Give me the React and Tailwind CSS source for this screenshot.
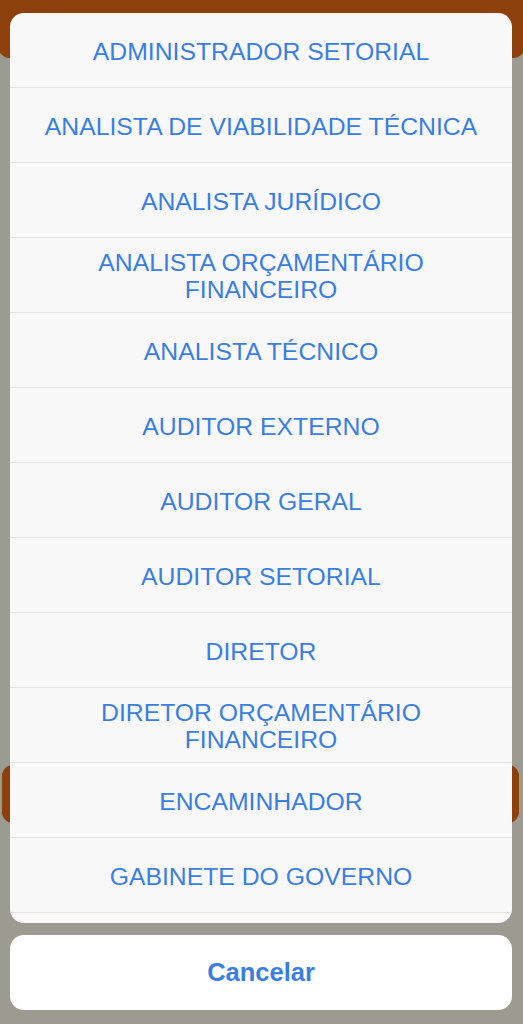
const OPTIONS = [
  ["ADMINISTRADOR SETORIAL"],
  ["ANALISTA DE VIABILIDADE TÉCNICA"],
  ["ANALISTA JURÍDICO"],
  ["ANALISTA ORÇAMENTÁRIO", "FINANCEIRO"],
  ["ANALISTA TÉCNICO"],
  ["AUDITOR EXTERNO"],
  ["AUDITOR GERAL"],
  ["AUDITOR SETORIAL"],
  ["DIRETOR"],
  ["DIRETOR ORÇAMENTÁRIO", "FINANCEIRO"],
  ["ENCAMINHADOR"],
  ["GABINETE DO GOVERNO"],
];

export default function App() {
  return (
    <div
      className="relative h-[1024px] w-full overflow-hidden bg-[#9b9b92]"
      style={{ fontFamily: '"Liberation Sans", Arial, sans-serif' }}
    >
      {/* page content behind the dimmed overlay */}
      <div className="absolute left-[-2px] right-[-2px] top-[-20px] h-[78px] rounded-[12px] bg-[#8e400c]" />
      <div className="absolute left-[2px] right-[4px] top-[765px] h-[58px] rounded-[11px] bg-[#8e400c]" />

      {/* action sheet */}
      <div className="absolute inset-0 flex flex-col pl-[10px] pr-[11px] pt-[13px] pb-[14px]">
        <div className="h-[910px] overflow-hidden rounded-[14px] bg-[#f8f8f8]">
          {OPTIONS.map((lines) => (
            <button
              key={lines.join(" ")}
              className="flex h-[75px] w-full flex-col items-center justify-center border-b border-[#e2e2e2] pt-[2px] text-center text-[24.75px] leading-[27px] text-[#3a7fe0]"
            >
              {lines.map((l) => (
                <span key={l}>{l}</span>
              ))}
            </button>
          ))}
          <div className="h-[75px] w-full" />
        </div>
        <button className="mt-[12px] flex h-[75px] items-center justify-center rounded-[14px] bg-white text-[25.5px] font-bold text-[#3a7fe0]">
          Cancelar
        </button>
      </div>
    </div>
  );
}
